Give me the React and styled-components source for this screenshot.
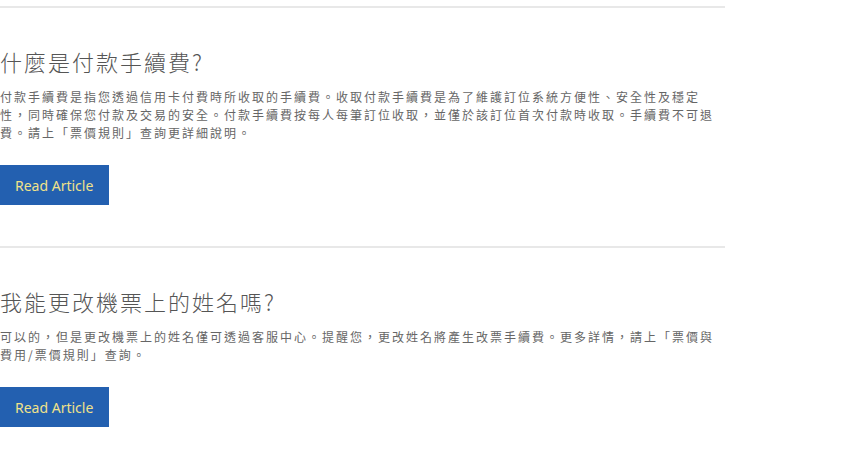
import React from "react";
import styled, { createGlobalStyle } from "styled-components";

const GlobalStyle = createGlobalStyle`
  body {
    margin: 0;
    background: #fff;
    font-family: "Noto Sans CJK TC", "Noto Sans", sans-serif;
  }
`;

const articles = [
  {
    title: "什麼是付款手續費?",
    body:
      "付款手續費是指您透過信用卡付費時所收取的手續費。收取付款手續費是為了維護訂位系統方便性、安全性及穩定性，同時確保您付款及交易的安全。付款手續費按每人每筆訂位收取，並僅於該訂位首次付款時收取。手續費不可退費。請上「票價規則」查詢更詳細說明。",
  },
  {
    title: "我能更改機票上的姓名嗎?",
    body:
      "可以的，但是更改機票上的姓名僅可透過客服中心。提醒您，更改姓名將產生改票手續費。更多詳情，請上「票價與費用/票價規則」查詢。",
  },
];

const App = () => {
  return (
    <Page lang="zh-TW">
      <GlobalStyle />
      {articles.map((a) => (
        <Article key={a.title}>
          <Title>{a.title}</Title>
          <Body>{a.body}</Body>
          <ReadButton lang="en">Read Article</ReadButton>
        </Article>
      ))}
    </Page>
  );
};

const Page = styled.div`
  width: 725px;
  padding-top: 6px;
`;

const Article = styled.section`
  border-top: 2px solid #e8e8e8;
  padding: 38px 0 41px;
  display: flex;
  flex-direction: column;
  align-items: flex-start;
`;

const Title = styled.h2`
  margin: 0 0 12px;
  font-family: "Noto Sans CJK TC", "Noto Sans", sans-serif;
  font-size: 22px;
  font-weight: 300;
  line-height: 30px;
  letter-spacing: 2px;
  color: #555;
`;

const Body = styled.p`
  margin: 0 0 23px;
  font-family: "Noto Sans CJK TC", "Noto Sans", sans-serif;
  font-size: 12px;
  line-height: 18px;
  letter-spacing: 2px;
  color: #666;
`;

const ReadButton = styled.a`
  display: flex;
  align-items: center;
  box-sizing: border-box;
  height: 40px;
  width: 109px;
  padding: 0 15px;
  background: #2360b0;
  color: #f0e28a;
  font-family: "Noto Sans", "Open Sans", sans-serif;
  font-size: 14px;
  letter-spacing: 0;
  cursor: pointer;
`;

export default App;
